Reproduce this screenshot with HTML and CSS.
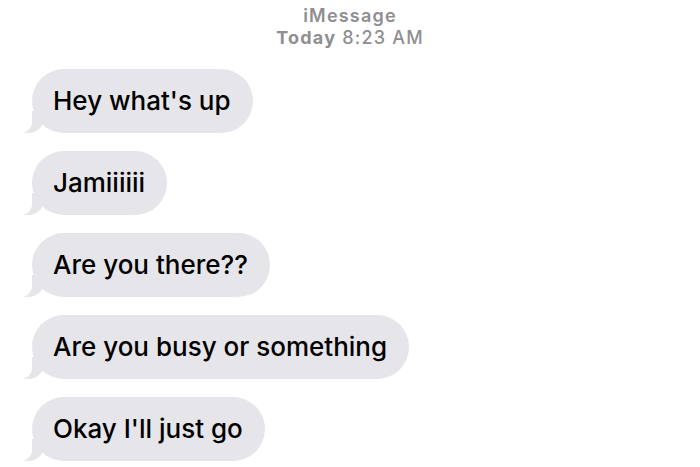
FILE: index.html
```html
<!DOCTYPE html>
<html lang="en">
<head>
    <meta charset="UTF-8">
    <meta name="viewport" content="width=device-width, initial-scale=1.0">
    <title>iMessage</title>
    <link rel="stylesheet" href="styles.css">
</head>
<body>
    <div class="header">
        <div class="service">iMessage</div>
        <div class="time"><b>Today</b> 8:23 AM</div>
    </div>
    <div class="thread">
        <div class="bubble">Hey what's up</div>
        <div class="bubble">Jamiiiiii</div>
        <div class="bubble">Are you there??</div>
        <div class="bubble">Are you busy or something</div>
        <div class="bubble">Okay I'll just go</div>
    </div>
</body>
</html>
```
FILE: styles.css
```css
body {
    margin: 0;
    background-color: #ffffff;
    font-family: Inter, "Liberation Sans", sans-serif;
    overflow: hidden;
}
.header {
    display: flex;
    flex-direction: column;
    align-items: center;
    padding-top: 5px;
    color: #8e8e93;
    font-size: 18px;
    line-height: 22px;
    letter-spacing: 1.2px;
}
.service {
    font-weight: 600;
}
.time {
    font-weight: 500;
}
.time b {
    font-weight: 700;
}
.thread {
    display: flex;
    flex-direction: column;
    align-items: flex-start;
    gap: 18px;
    padding: 20px 0 0 32px;
    isolation: isolate;
}
.bubble {
    position: relative;
    background-color: #e5e5ea;
    color: #000000;
    font-size: 26px;
    font-weight: 500;
    line-height: 64px;
    height: 64px;
    padding: 0 22px 0 21px;
    border-radius: 32px;
}
/* tail */
.bubble::before {
    content: "";
    position: absolute;
    bottom: 0;
    left: -11px;
    width: 24px;
    height: 22px;
    background-color: #e5e5ea;
    border-bottom-right-radius: 17px;
    z-index: -1;
}
.bubble::after {
    content: "";
    position: absolute;
    bottom: 0;
    left: -15px;
    width: 15px;
    height: 22px;
    background-color: #ffffff;
    border-bottom-right-radius: 11px;
    z-index: -1;
}
```
